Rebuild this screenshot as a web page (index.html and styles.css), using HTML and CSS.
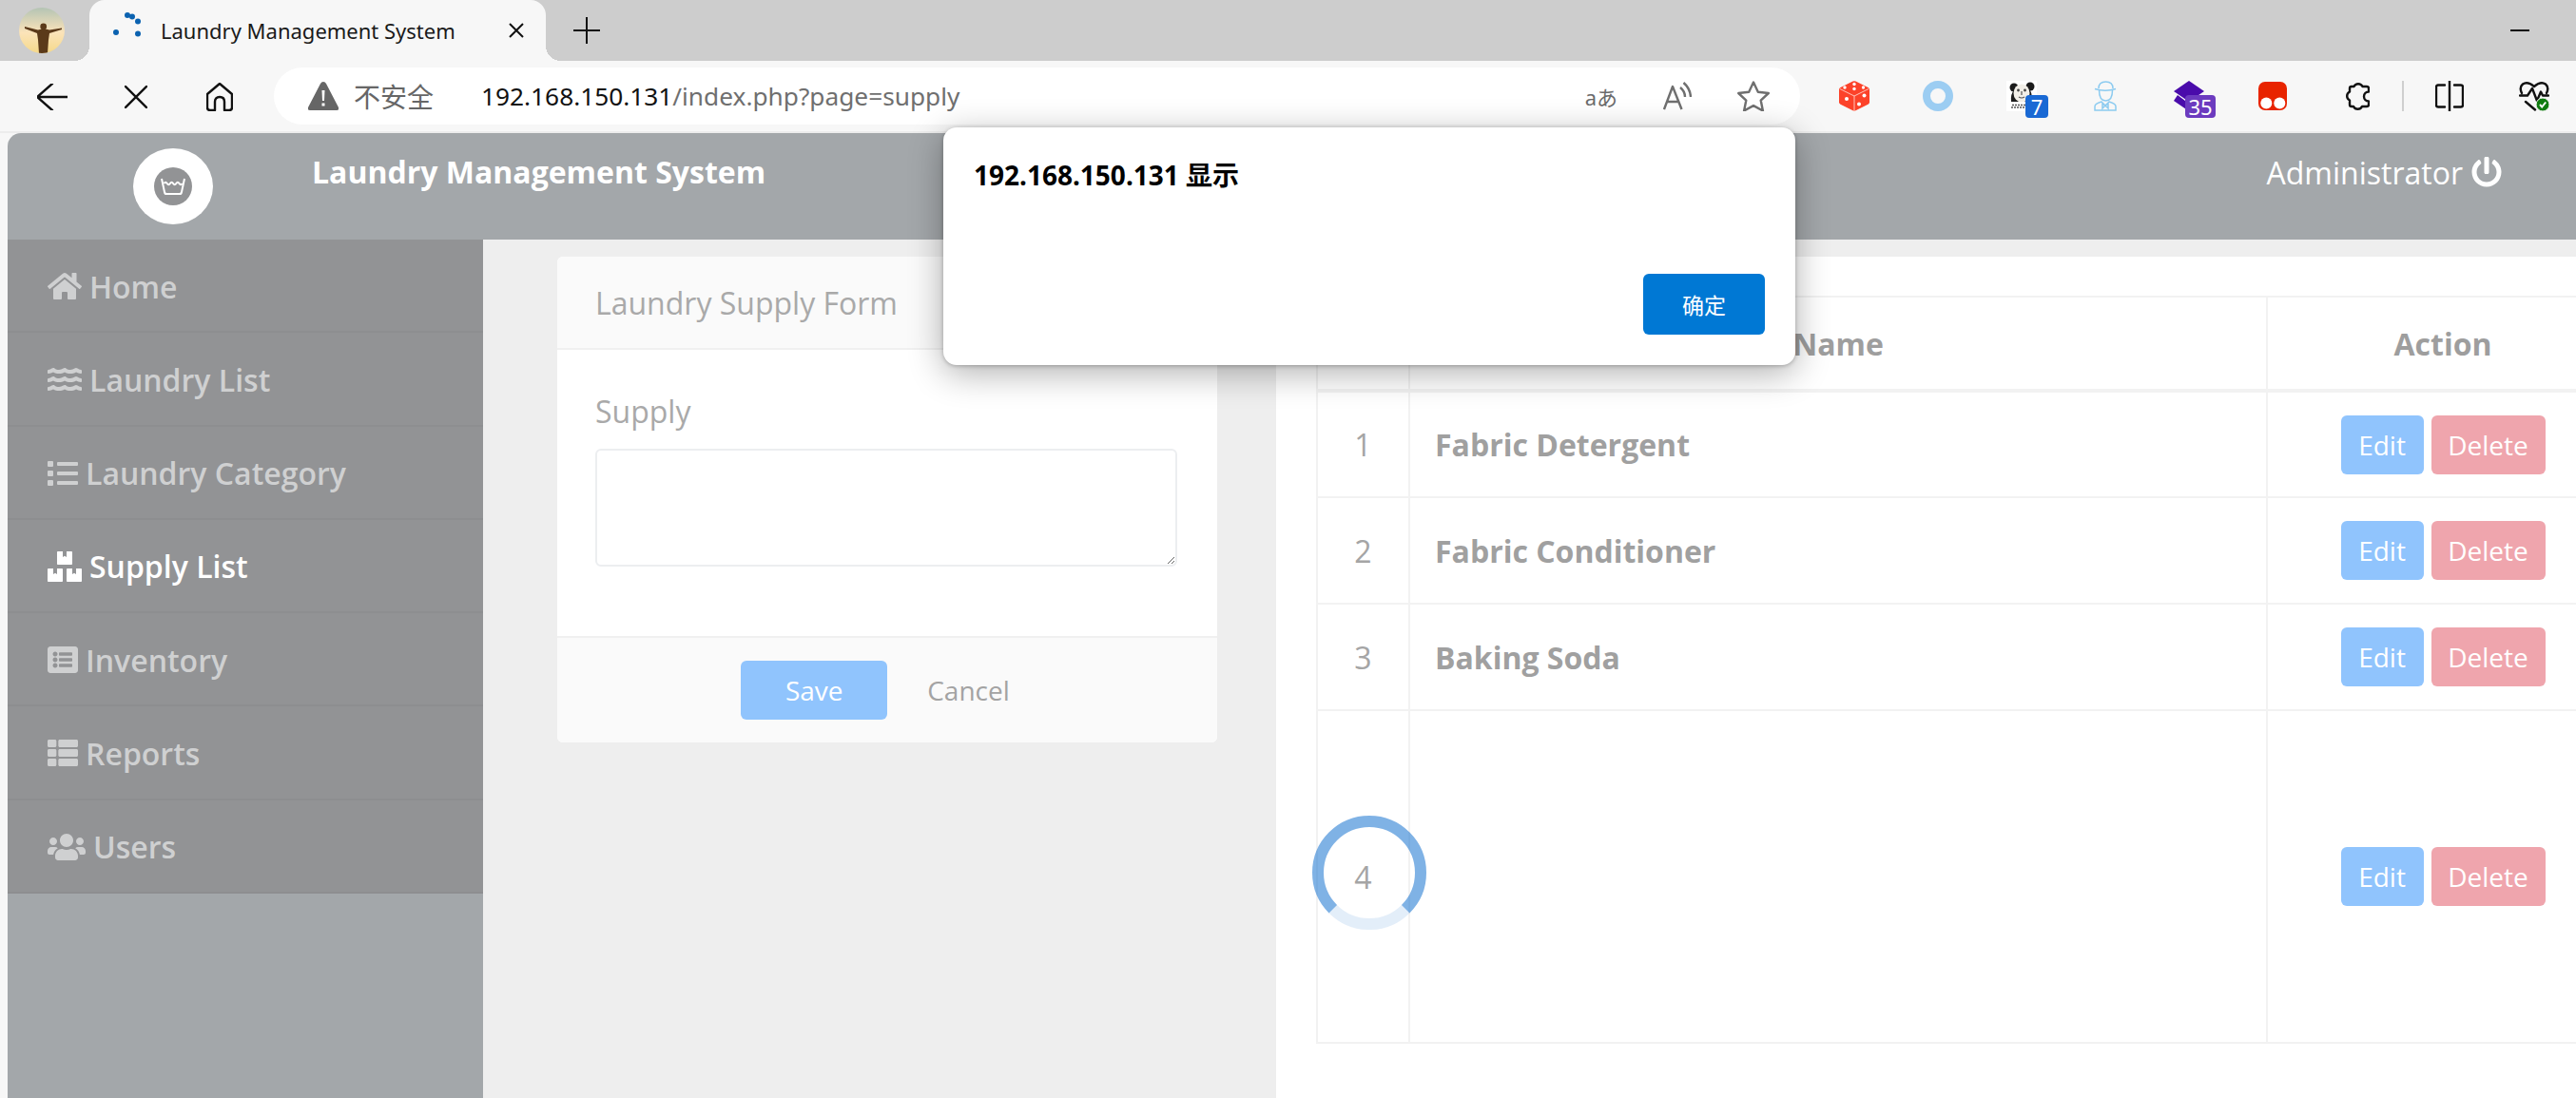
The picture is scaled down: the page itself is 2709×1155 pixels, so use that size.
FILE: index.html
```html
<!DOCTYPE html>
<html lang="en">
<head>
    <meta charset="UTF-8">
    <meta name="viewport" content="width=device-width, initial-scale=1.0">
    <title>Laundry Management System</title>
    <link rel="stylesheet" href="styles.css">
</head>
<body>
    <div class="tabstrip">
        <div class="avatar">
            <svg viewBox="0 0 48 48" width="48" height="48">
                <path class="avatar-man" d="M6 20l14 3.500q6-2 12 0l13-2v1.500l-13 4-1 7-1 14h-9l-1-14-1-7-13-5z"/>
                <circle class="avatar-man" cx="25.700" cy="20" r="3.400"/>
            </svg>
        </div>
        <div class="tab">
            <svg class="tab-spinner" viewBox="0 0 32 32" width="32" height="32">
                <circle cx="15" cy="3" r="3"/>
                <circle cx="20" cy="4.500" r="3"/>
                <circle cx="26" cy="9.500" r="3"/>
                <circle cx="3" cy="21" r="3"/>
                <circle cx="26" cy="22.500" r="3"/>
            </svg>
            <span class="tab-title">Laundry Management System</span>
            <svg class="tab-close" viewBox="0 0 16 16" width="16" height="16">
                <path d="M1 1l14 14M15 1L1 15"/>
            </svg>
        </div>
        <svg class="tab-new" viewBox="0 0 28 28" width="28" height="28">
            <path d="M14 0v28M0 14h28"/>
        </svg>
        <div class="minimize"></div>
    </div>

    <div class="toolbar">
        <div class="nav-button">
            <svg viewBox="0 0 32 28" width="32" height="28"><path class="line-icon" d="M32 14H0M16 0L0 14l16 14"/></svg>
        </div>
        <div class="nav-button">
            <svg viewBox="0 0 24 24" width="24" height="24"><path class="line-icon" d="M0 0l24 24M24 0L0 24"/></svg>
        </div>
        <div class="nav-button">
            <svg viewBox="0 0 28 30" width="28" height="30"><path class="line-icon" d="M14 1L1 12v14q0 3 3 3h5V20q0-5 5-5t5 5v9h5q3 0 3-3V12z"/></svg>
        </div>
        <div class="address">
            <svg class="warning" viewBox="0 0 32 30" width="32" height="30">
                <path d="M16 0q2 0 3 2l13 25q1 3-2 3H2q-3 0-2-3L13 2q1-2 3-2z"/>
                <path class="warning-mark" d="M14.500 9h3l-.5 11h-2zM14.500 22.500h3v3h-3z"/>
            </svg>
            <span class="not-secure">不安全</span>
            <span class="url"><span class="url-host">192.168.150.131</span>/index.php?page=supply</span>
            <div class="address-actions">
                <span class="translate">aあ</span>
                <svg class="read-aloud" viewBox="0 0 30 32" width="30" height="32">
                    <path d="M1 30L10 6l9.500 24M4.500 22h11.500M18 7q5 4 5 10M21.500 2q7 6 7.500 15"/>
                </svg>
                <svg class="star" viewBox="0 0 34 32" width="34" height="32">
                    <path d="M17 1.500l4.800 10.200 11 1.300-8.100 7.600 2.200 10.900L17 26.100 7.100 31.500l2.200-10.900L1.200 13l11-1.300z"/>
                </svg>
            </div>
        </div>
        <div class="extensions">
            <div class="ext">
                <svg viewBox="0 0 32 32" width="32" height="32">
                    <path class="dice" d="M14.500.5q1.500-.7 3 0l13 6.500q1.500.8 1.500 2.500v13q0 1.500-1.500 2.300l-13 6.500q-1.500.7-3 0l-13-6.500Q0 24 0 22.500v-13Q0 7.800 1.500 7z"/>
                    <path class="dice-line" d="M1 8.500l15 7.500 15-7.500M16 16v16"/>
                    <circle class="dice-dot" cx="6" cy="7" r="1.700"/>
                    <circle class="dice-dot" cx="16" cy="3.500" r="1.700"/>
                    <circle class="dice-dot" cx="16" cy="8.500" r="1.700"/>
                    <circle class="dice-dot" cx="25.500" cy="7" r="1.700"/>
                    <circle class="dice-dot" cx="8" cy="19" r="2"/>
                    <circle class="dice-dot" cx="26.500" cy="15.500" r="2"/>
                    <circle class="dice-dot" cx="21" cy="24.500" r="2"/>
                </svg>
            </div>
            <div class="ext">
                <svg viewBox="0 0 32 32" width="32" height="32"><circle class="ring" cx="16" cy="16" r="12"/></svg>
            </div>
            <div class="ext">
                <svg viewBox="0 0 32 32" width="32" height="32">
                    <rect class="panda-bg" width="32" height="32"/>
                    <circle class="panda-dark" cx="8" cy="7" r="4.500"/>
                    <circle class="panda-dark" cx="25" cy="6" r="4.500"/>
                    <path class="panda-dark" d="M5 22q-1-8 3-12h17q3 6 1 12z"/>
                    <ellipse class="panda-face" cx="16" cy="13" rx="8.500" ry="9.500"/>
                    <circle class="panda-eye" cx="12.500" cy="10" r="1.400"/>
                    <circle class="panda-eye" cx="19.500" cy="10" r="1.400"/>
                    <path class="panda-mouth" d="M13 17q3 2 6 0M16 11v4"/>
                    <path class="panda-text" d="M6 25.500h20M5 28h21"/>
                </svg>
                <span class="badge badge-blue">7</span>
            </div>
            <div class="ext">
                <svg viewBox="0 0 24 32" width="24" height="32">
                    <path class="figure" d="M5 8q0-7 7.500-7T20 8M1 8.500q11 3.500 22 0M5.500 10q0 11 7 11t7-11M1 31v-4q0-3 7-5l4 4 4-4q7 2 7 5v4zM9 24l3 2 3-2v5l-3-3-3 3z"/>
                </svg>
            </div>
            <div class="ext">
                <svg viewBox="0 0 32 32" width="32" height="32">
                    <path class="diamond" d="M16 0l16 11-16 11L0 11z"/>
                    <path class="diamond" d="M4 15l12 9 12-9 1 2-13 15L0 21z"/>
                </svg>
                <span class="badge badge-purple">35</span>
            </div>
            <div class="ext">
                <svg viewBox="0 0 30 30" width="30" height="30">
                    <rect class="monkey" width="30" height="30" rx="7"/>
                    <circle class="monkey-eye" cx="8.300" cy="22.500" r="6"/>
                    <circle class="monkey-eye" cx="22.300" cy="22.500" r="6"/>
                </svg>
            </div>
            <div class="ext">
                <svg viewBox="0 0 28 32" width="28" height="32">
                    <path class="line-icon" d="M9 6h2.500a5 5 0 0 1 9 0H25q2 0 2 2v3.500a5 5 0 0 0 0 10V25q0 2-2 2h-5a5 5 0 0 1-9 0H9q-2 0-2-2v-4.500a5 5 0 0 1 0-9V8q0-2 2-2z"/>
                </svg>
            </div>
            <div class="ext-sep"></div>
            <div class="ext ext-split">
                <svg viewBox="0 0 30 32" width="30" height="32">
                    <path class="line-icon" d="M10 4.500H3q-2 0-2 2v19q0 2 2 2h7M20 4.500h7q2 0 2 2v19q0 2-2 2h-7M15 0v32"/>
                </svg>
            </div>
            <div class="ext">
                <svg viewBox="0 0 32 32" width="32" height="32">
                    <path class="line-icon" d="M3 13Q0 7 4 3.500 9 0 16 6q7-6 12-2.500 4 3.500 1 9.500M1 15.500h8L14 8l5 13 4-9.500 2 4h6M7 22l10 8.500"/>
                    <circle class="check-bg" cx="25" cy="25" r="7"/>
                    <path class="check-mark" d="M22 25l2.200 2.500 4-5"/>
                </svg>
            </div>
        </div>
    </div>

    <div class="page">
        <div class="app">
            <div class="navbar">
                <div class="logo">
                    <div class="logo-inner">
                        <svg viewBox="0 0 26 26" width="26" height="26">
                            <path class="basin" d="M1 5l3 14q.3 2 2 2h14q1.700 0 2-2l3-14"/>
                            <path class="basin-wave" d="M3.500 10q1.600-2.500 3.200 0t3.200 0 3.200 0 3.200 0 3.200 0 3.200 0"/>
                        </svg>
                    </div>
                </div>
                <div class="brand">Laundry Management System</div>
                <div class="admin">
                    Administrator
                    <svg class="power" viewBox="0 0 512 512" width="32" height="32">
                        <path d="M400 54.100c63 45 104 118.600 104 201.900 0 136.800-110.800 247.700-247.500 248C120 504.300 8.200 393 8 256.400 7.900 173.100 48.900 99.300 111.800 54.200c11.700-8.300 28-4.800 35 7.700L162.600 90c5.900 10.500 3.100 23.800-6.600 31-41.500 30.800-68 79.600-68 134.900-.1 92.300 74.500 168.100 168 168.100 91.600 0 168.600-74.200 168-169.100-.3-51.800-24.700-101.800-68.100-134-9.700-7.200-12.400-20.500-6.400-30.900l15.800-28.100c7-12.400 23.200-16.100 34.800-7.800zM296 264V24c0-13.300-10.700-24-24-24h-32c-13.300 0-24 10.700-24 24v240c0 13.300 10.700 24 24 24h32c13.300 0 24-10.700 24-24z"/>
                    </svg>
                </div>
            </div>

            <div class="main">
                <div class="sidebar">
                    <a class="side-item">
                        <svg class="side-icon" viewBox="0 0 576 512" width="36" height="32"><path d="M280.370 148.260L96 300.110V464a16 16 0 0 0 16 16l112.060-.29a16 16 0 0 0 15.920-16V368a16 16 0 0 1 16-16h64a16 16 0 0 1 16 16v95.640a16 16 0 0 0 16 16.050L464 480a16 16 0 0 0 16-16V300L295.670 148.260a12.190 12.190 0 0 0-15.300 0zM571.600 251.470L488 182.560V44.050a12 12 0 0 0-12-12h-56a12 12 0 0 0-12 12v72.610L318.470 43a48 48 0 0 0-61 0L4.340 251.470a12 12 0 0 0-1.600 16.900l25.500 31A12 12 0 0 0 45.150 301l235.220-193.740a12.190 12.190 0 0 1 15.300 0L530.900 301a12 12 0 0 0 16.900-1.600l25.500-31a12 12 0 0 0-1.700-16.930z"/></svg>
                        Home
                    </a>
                    <a class="side-item">
                        <svg class="side-icon" viewBox="0 0 576 512" width="36" height="32"><path d="M562.100 383.900c-21.500-2.400-42.100-10.500-57.900-22.900-14.100-11.100-34.200-11.300-48.200 0-37.900 30.400-107.200 30.400-145.700-1.500-13.500-11.200-33-9.100-46.700 1.800-38 30.100-106.900 30-145.200-1.700-13.500-11.200-33.300-8.900-47.100 2-15.500 12.200-36 20.100-57.700 22.400-7.900.8-13.600 7.800-13.600 15.700v32.200c0 9.100 7.600 16.800 16.700 16 28.800-2.500 56.100-11.400 79.400-25.900 56.500 34.600 137 34.100 192 0 56.500 34.600 137 34.100 192 0 23.300 14.200 50.900 23.300 79.100 25.800 9.100.8 16.700-6.900 16.700-16v-31.600c.1-8-5.700-15.400-13.800-16.300zm0-144c-21.500-2.400-42.100-10.500-57.900-22.900-14.100-11.100-34.200-11.300-48.200 0-37.900 30.400-107.200 30.400-145.700-1.500-13.500-11.200-33-9.100-46.700 1.800-38 30.100-106.900 30-145.200-1.700-13.500-11.200-33.300-8.900-47.100 2-15.500 12.200-36 20.100-57.700 22.400-7.900.8-13.600 7.800-13.600 15.700v32.200c0 9.100 7.600 16.800 16.700 16 28.800-2.500 56.100-11.400 79.400-25.900 56.500 34.600 137 34.100 192 0 56.500 34.600 137 34.100 192 0 23.300 14.200 50.900 23.300 79.100 25.800 9.100.8 16.700-6.900 16.700-16v-31.600c.1-8-5.700-15.400-13.800-16.300zm0-144C540.600 93.400 520 85.400 504.200 73 490.100 61.900 470 61.700 456 73c-37.900 30.400-107.200 30.400-145.700-1.500-13.500-11.200-33-9.100-46.700 1.800-38 30.100-106.900 30-145.200-1.700-13.500-11.200-33.300-8.900-47.100 2-15.500 12.200-36 20.100-57.700 22.400-7.900.8-13.600 7.800-13.600 15.700v32.200c0 9.100 7.600 16.800 16.700 16 28.800-2.500 56.100-11.400 79.400-25.900 56.500 34.600 137 34.100 192 0 56.500 34.600 137 34.100 192 0 23.300 14.200 50.900 23.300 79.100 25.800 9.100.8 16.700-6.900 16.700-16v-31.600c.1-8-5.700-15.400-13.800-16.300z"/></svg>
                        Laundry List
                    </a>
                    <a class="side-item">
                        <svg class="side-icon" viewBox="0 0 512 512" width="32" height="32"><path d="M80 368H16a16 16 0 0 0-16 16v64a16 16 0 0 0 16 16h64a16 16 0 0 0 16-16v-64a16 16 0 0 0-16-16zm0-320H16A16 16 0 0 0 0 64v64a16 16 0 0 0 16 16h64a16 16 0 0 0 16-16V64a16 16 0 0 0-16-16zm0 160H16a16 16 0 0 0-16 16v64a16 16 0 0 0 16 16h64a16 16 0 0 0 16-16v-64a16 16 0 0 0-16-16zm416 176H176a16 16 0 0 0-16 16v32a16 16 0 0 0 16 16h320a16 16 0 0 0 16-16v-32a16 16 0 0 0-16-16zm0-320H176a16 16 0 0 0-16 16v32a16 16 0 0 0 16 16h320a16 16 0 0 0 16-16V80a16 16 0 0 0-16-16zm0 160H176a16 16 0 0 0-16 16v32a16 16 0 0 0 16 16h320a16 16 0 0 0 16-16v-32a16 16 0 0 0-16-16z"/></svg>
                        Laundry Category
                    </a>
                    <a class="side-item side-item-active">
                        <svg class="side-icon" viewBox="0 0 576 512" width="36" height="32"><path d="M560 288h-80v96l-32-21.300-32 21.300v-96h-80c-8.800 0-16 7.200-16 16v192c0 8.800 7.200 16 16 16h224c8.800 0 16-7.200 16-16V304c0-8.800-7.200-16-16-16zm-384-64h224c8.800 0 16-7.200 16-16V16c0-8.800-7.200-16-16-16h-80v96l-32-21.300L256 96V0h-80c-8.800 0-16 7.200-16 16v192c0 8.800 7.200 16 16 16zm64 64h-80v96l-32-21.300L96 384v-96H16c-8.800 0-16 7.200-16 16v192c0 8.800 7.200 16 16 16h224c8.800 0 16-7.200 16-16V304c0-8.800-7.200-16-16-16z"/></svg>
                        Supply List
                    </a>
                    <a class="side-item">
                        <svg class="side-icon" viewBox="0 0 512 512" width="32" height="32"><path d="M464 480H48c-26.510 0-48-21.490-48-48V80c0-26.510 21.490-48 48-48h416c26.510 0 48 21.490 48 48v352c0 26.510-21.490 48-48 48zM128 120c-22.091 0-40 17.909-40 40s17.909 40 40 40 40-17.909 40-40-17.909-40-40-40zm0 96c-22.091 0-40 17.909-40 40s17.909 40 40 40 40-17.909 40-40-17.909-40-40-40zm0 96c-22.091 0-40 17.909-40 40s17.909 40 40 40 40-17.909 40-40-17.909-40-40-40zm288-136v-32c0-6.627-5.373-12-12-12H204c-6.627 0-12 5.373-12 12v32c0 6.627 5.373 12 12 12h200c6.627 0 12-5.373 12-12zm0 96v-32c0-6.627-5.373-12-12-12H204c-6.627 0-12 5.373-12 12v32c0 6.627 5.373 12 12 12h200c6.627 0 12-5.373 12-12zm0 96v-32c0-6.627-5.373-12-12-12H204c-6.627 0-12 5.373-12 12v32c0 6.627 5.373 12 12 12h200c6.627 0 12-5.373 12-12z"/></svg>
                        Inventory
                    </a>
                    <a class="side-item">
                        <svg class="side-icon" viewBox="0 0 512 512" width="32" height="32"><path d="M149.333 216v80c0 13.255-10.745 24-24 24H24c-13.255 0-24-10.745-24-24v-80c0-13.255 10.745-24 24-24h101.333c13.255 0 24 10.745 24 24zM0 376v80c0 13.255 10.745 24 24 24h101.333c13.255 0 24-10.745 24-24v-80c0-13.255-10.745-24-24-24H24c-13.255 0-24 10.745-24 24zM125.333 32H24C10.745 32 0 42.745 0 56v80c0 13.255 10.745 24 24 24h101.333c13.255 0 24-10.745 24-24V56c0-13.255-10.745-24-24-24zm80 448H488c13.255 0 24-10.745 24-24v-80c0-13.255-10.745-24-24-24H205.333c-13.255 0-24 10.745-24 24v80c0 13.255 10.745 24 24 24zm-24-424v80c0 13.255 10.745 24 24 24H488c13.255 0 24-10.745 24-24V56c0-13.255-10.745-24-24-24H205.333c-13.255 0-24 10.745-24 24zm24 264H488c13.255 0 24-10.745 24-24v-80c0-13.255-10.745-24-24-24H205.333c-13.255 0-24 10.745-24 24v80c0 13.255 10.745 24 24 24z"/></svg>
                        Reports
                    </a>
                    <a class="side-item">
                        <svg class="side-icon" viewBox="0 0 640 512" width="40" height="32"><path d="M96 224c35.300 0 64-28.700 64-64s-28.700-64-64-64-64 28.700-64 64 28.700 64 64 64zm448 0c35.300 0 64-28.700 64-64s-28.700-64-64-64-64 28.700-64 64 28.700 64 64 64zm32 32h-64c-17.600 0-33.500 7.100-45.100 18.600 40.300 22.100 68.900 62 75.100 109.400h66c17.700 0 32-14.300 32-32v-32c0-35.300-28.700-64-64-64zm-256 0c61.900 0 112-50.100 112-112S381.900 32 320 32 208 82.100 208 144s50.100 112 112 112zm76.800 32h-8.300c-20.800 10-43.900 16-68.500 16s-47.600-6-68.500-16h-8.300C179.600 288 128 339.600 128 403.200V432c0 26.500 21.500 48 48 48h288c26.500 0 48-21.500 48-48v-28.800c0-63.600-51.600-115.200-115.200-115.200zm-223.700-13.400C161.500 263.100 145.600 256 128 256H64c-35.300 0-64 28.700-64 64v32c0 17.700 14.300 32 32 32h65.900c6.300-47.400 34.900-87.300 75.200-109.400z"/></svg>
                        Users
                    </a>
                </div>

                <div class="content">
                    <div class="form-card">
                        <div class="form-head">Laundry Supply Form</div>
                        <div class="form-body">
                            <label class="form-label">Supply</label>
                            <textarea class="form-input"></textarea>
                        </div>
                        <div class="form-foot">
                            <button class="btn btn-save">Save</button>
                            <button class="btn btn-cancel">Cancel</button>
                        </div>
                    </div>

                    <div class="list-card">
                        <table class="list-table">
                            <colgroup>
                                <col class="col-num">
                                <col class="col-name">
                                <col class="col-action">
                            </colgroup>
                            <thead>
                                <tr class="row-head">
                                    <th>#</th>
                                    <th>Name</th>
                                    <th>Action</th>
                                </tr>
                            </thead>
                            <tbody>
                                <tr class="row">
                                    <td class="cell-num">1</td>
                                    <td class="cell-name">Fabric Detergent</td>
                                    <td class="cell-action"><button class="btn btn-edit">Edit</button><button class="btn btn-delete">Delete</button></td>
                                </tr>
                                <tr class="row">
                                    <td class="cell-num">2</td>
                                    <td class="cell-name">Fabric Conditioner</td>
                                    <td class="cell-action"><button class="btn btn-edit">Edit</button><button class="btn btn-delete">Delete</button></td>
                                </tr>
                                <tr class="row">
                                    <td class="cell-num">3</td>
                                    <td class="cell-name">Baking Soda</td>
                                    <td class="cell-action"><button class="btn btn-edit">Edit</button><button class="btn btn-delete">Delete</button></td>
                                </tr>
                                <tr class="row row-tall">
                                    <td class="cell-num">
                                        4
                                        <svg class="spinner" viewBox="0 0 120 120" width="120" height="120">
                                            <path class="spinner-track" d="M21.800 98.200a54 54 0 0 0 76.400 0"/>
                                            <path class="spinner-arc" d="M21.800 98.200a54 54 0 1 1 76.400 0"/>
                                        </svg>
                                    </td>
                                    <td class="cell-name"></td>
                                    <td class="cell-action"><button class="btn btn-edit">Edit</button><button class="btn btn-delete">Delete</button></td>
                                </tr>
                            </tbody>
                        </table>
                    </div>
                </div>
            </div>
        </div>
    </div>

    <div class="dialog">
        <div class="dialog-title">192.168.150.131 显示</div>
        <div class="dialog-foot">
            <button class="dialog-ok">确定</button>
        </div>
    </div>
</body>
</html>
```

FILE: styles.css
```css
* {
    box-sizing: border-box;
}
body {
    margin: 0;
    width: 2709px;
    height: 1155px;
    overflow: hidden;
    display: flex;
    flex-direction: column;
    font-family: "Open Sans", "Noto Sans CJK SC", sans-serif;
    background-color: #f7f7f7;
}
svg {
    display: block;
    flex-shrink: 0;
}

/* browser chrome */
.tabstrip {
    height: 64px;
    flex-shrink: 0;
    display: flex;
    align-items: center;
    background-color: #cdcdcd;
    font-family: "Noto Sans", "Noto Sans CJK SC", sans-serif;
}
.avatar {
    width: 48px;
    height: 48px;
    margin-left: 20px;
    border-radius: 50%;
    overflow: hidden;
    background: linear-gradient(#b4c4b4, #fbe3b9 55%, #f5d98a);
}
.avatar-man {
    fill: #5b3a1a;
}
.tab {
    position: relative;
    width: 480px;
    height: 64px;
    margin-left: 26px;
    padding-left: 25px;
    display: flex;
    align-items: center;
    background-color: #f7f7f7;
    border-radius: 16px 16px 0 0;
}
.tab::before,
.tab::after {
    content: "";
    position: absolute;
    bottom: 0;
    width: 16px;
    height: 16px;
}
.tab::before {
    left: -16px;
    background: radial-gradient(circle at 0 0, transparent 16px, #f7f7f7 16px);
}
.tab::after {
    right: -16px;
    background: radial-gradient(circle at 100% 0, transparent 16px, #f7f7f7 16px);
}
.tab-spinner {
    fill: #0b62b0;
    margin-top: -6px;
}
.tab-title {
    margin-left: 18px;
    font-size: 22px;
    color: #1a1a1a;
    white-space: nowrap;
    width: 366px;
}
.tab-close path,
.tab-new path {
    fill: none;
    stroke: #111;
    stroke-width: 2;
}
.tab-new {
    margin-left: 29px;
}
.minimize {
    width: 20px;
    height: 2px;
    margin-left: auto;
    margin-right: 49px;
    background-color: #111;
}
.toolbar {
    height: 76px;
    flex-shrink: 0;
    display: flex;
    align-items: center;
    padding-left: 11px;
    background-color: #f7f7f7;
    border-bottom: 2px solid #ececec;
    font-family: "Noto Sans", "Noto Sans CJK SC", sans-serif;
}
.nav-button {
    width: 88px;
    height: 60px;
    margin-top: 1px;
    display: flex;
    align-items: center;
    justify-content: center;
}
.line-icon {
    fill: none;
    stroke: #111;
    stroke-width: 2.400;
    stroke-linejoin: round;
    stroke-linecap: round;
}
.address {
    width: 1605px;
    height: 60px;
    margin-left: 13px;
    padding-left: 36px;
    display: flex;
    align-items: center;
    background-color: #fff;
    border-radius: 30px;
}
.warning {
    fill: #666;
}
.warning-mark {
    fill: #fff;
}
.not-secure {
    margin-left: 16px;
    font-size: 28px;
    color: #666;
}
.url {
    margin-left: 50px;
    font-size: 26.250px;
    color: #6f6f6f;
    white-space: nowrap;
}
.url-host {
    color: #111;
}
.address-actions {
    margin-left: auto;
    margin-right: 32px;
    display: flex;
    align-items: center;
    gap: 48px;
}
.translate {
    font-size: 22px;
    color: #6b6b6b;
}
.read-aloud,
.star {
    fill: none;
    stroke: #6f6f6f;
    stroke-width: 2.400;
    stroke-linejoin: round;
}
.extensions {
    display: flex;
    align-items: center;
    margin-left: 13px;
}
.ext {
    position: relative;
    width: 88px;
    height: 60px;
    display: flex;
    align-items: center;
    justify-content: center;
}
.ext-sep {
    width: 2px;
    height: 32px;
    margin: 0 4px;
    background-color: #cfcfcf;
}
.ext-split {
    margin-right: 1px;
}
.badge {
    position: absolute;
    top: 29px;
    height: 24px;
    min-width: 24px;
    border-radius: 4px;
    color: #fff;
    font-size: 22px;
    line-height: 24px;
    text-align: center;
}
.badge-blue {
    left: 48px;
    background-color: #1a69d4;
}
.badge-purple {
    left: 40px;
    width: 32px;
    background-color: #6c3bbf;
}
.dice {
    fill: #fc4229;
}
.dice-line {
    fill: none;
    stroke: #ffc4ba;
    stroke-width: 1;
}
.dice-dot {
    fill: #fff;
}
.ring {
    fill: none;
    stroke: #9ccdf2;
    stroke-width: 8;
}
.panda-bg,
.panda-face {
    fill: #fff;
}
.panda-face {
    fill: #f2efe8;
}
.panda-dark {
    fill: #1c1c1c;
}
.panda-eye {
    fill: #444;
}
.panda-mouth {
    fill: none;
    stroke: #555;
    stroke-width: 1.200;
}
.panda-text {
    fill: none;
    stroke: #555;
    stroke-width: 1.500;
    stroke-dasharray: 2 1;
}
.figure {
    fill: none;
    stroke: #8ccbf0;
    stroke-width: 1.500;
}
.diamond {
    fill: #4a0cab;
}
.monkey {
    fill: #e82400;
}
.monkey-eye {
    fill: #fff;
}
.check-bg {
    fill: #107c10;
    stroke: #f7f7f7;
    stroke-width: 1;
}
.check-mark {
    fill: none;
    stroke: #fff;
    stroke-width: 2;
}

/* page */
.page {
    flex: 1;
    min-height: 0;
    padding-left: 8px;
    display: flex;
}
.app {
    flex: 1;
    display: flex;
    flex-direction: column;
    border-top-left-radius: 14px;
    overflow: hidden;
    background-color: #a3a7aa;
}
.navbar {
    height: 112px;
    flex-shrink: 0;
    display: flex;
    color: #fff;
}
.logo {
    width: 84px;
    height: 80px;
    margin: 16px 0 0 132px;
    display: flex;
    align-items: center;
    justify-content: center;
    background-color: #fff;
    border-radius: 50%;
}
.logo-inner {
    width: 40px;
    height: 40px;
    display: flex;
    align-items: center;
    justify-content: center;
    background-color: #929395;
    border-radius: 50%;
}
.basin,
.basin-wave {
    fill: none;
    stroke: #fff;
    stroke-width: 2;
}
.brand {
    margin: 20px 0 0 104px;
    font-size: 32px;
    font-weight: 700;
    line-height: 42px;
}
.admin {
    margin: 20px 78px 0 auto;
    display: flex;
    align-items: center;
    gap: 9px;
    height: 42px;
    font-size: 32px;
}
.power {
    fill: #fff;
}
.main {
    flex: 1;
    min-height: 0;
    display: flex;
}
.sidebar {
    width: 500px;
    flex-shrink: 0;
}
.side-item {
    height: 98.250px;
    padding: 2px 0 0 42px;
    display: flex;
    align-items: center;
    gap: 8px;
    background-color: #929395;
    border-bottom: 2px solid #8d8e90;
    color: #cfd0d1;
    font-size: 32px;
    font-weight: 600;
}
.side-item-active {
    color: #fff;
}
.side-icon {
    fill: currentColor;
}
.content {
    flex: 1;
    min-width: 0;
    padding: 18px 0 0 78px;
    display: flex;
    align-items: flex-start;
    gap: 62px;
    background-color: #eee;
}

/* form */
.form-card {
    width: 694px;
    height: 511px;
    flex-shrink: 0;
    display: flex;
    flex-direction: column;
    background-color: #fff;
    border-radius: 6px;
    overflow: hidden;
    color: #a9a9a9;
    font-size: 32px;
}
.form-head {
    height: 98px;
    padding-left: 40px;
    display: flex;
    align-items: center;
    background-color: #fafafa;
    border-bottom: 2px solid #f0f0f0;
}
.form-body {
    flex: 1;
    padding: 42px 40px 0;
}
.form-label {
    display: block;
    line-height: 46px;
    margin-bottom: 16px;
}
.form-input {
    display: block;
    width: 612px;
    height: 124px;
    border: 2px solid #eceef0;
    border-radius: 6px;
    outline: none;
}
.form-foot {
    height: 112px;
    padding-right: 4px;
    display: flex;
    align-items: center;
    justify-content: center;
    gap: 21px;
    background-color: #fafafa;
    border-top: 2px solid #f0f0f0;
}
.btn {
    height: 62px;
    padding: 0 21px;
    border: none;
    border-radius: 6px;
    font-family: inherit;
    font-size: 28px;
    color: #fff;
}
.btn-save {
    width: 154px;
    background-color: #90c4fd;
}
.btn-cancel {
    background-color: transparent;
    color: #a3a3a3;
}

/* table */
.list-card {
    width: 1500px;
    height: 900px;
    flex-shrink: 0;
    padding: 41px 0 0 42px;
    background-color: #fff;
}
.list-table {
    width: 1371px;
    table-layout: fixed;
    border-collapse: collapse;
    color: #a5a5a5;
    font-size: 32px;
}
.col-num {
    width: 97px;
}
.col-action {
    width: 370px;
}
.list-table th,
.list-table td {
    border: 2px solid #f2f2f2;
    padding: 0;
}
.row-head {
    height: 99px;
}
.list-table th {
    border-bottom-width: 4px;
    font-weight: 700;
    color: #9e9e9e;
}
.row {
    height: 112px;
}
.row-tall {
    height: 350px;
}
.cell-num {
    position: relative;
    text-align: center;
}
.cell-name {
    padding-left: 26px !important;
    font-weight: 700;
    color: #a0a0a0;
}
.cell-action {
    text-align: center;
    white-space: nowrap;
}
.btn-edit {
    width: 87px;
    padding: 0;
    margin-right: 8px;
    background-color: #90c4fd;
}
.btn-delete {
    width: 120px;
    padding: 0;
    background-color: #efa5ad;
}
.spinner {
    position: absolute;
    left: -6px;
    top: 50%;
    margin-top: -64px;
    fill: none;
    stroke-width: 12;
}
.spinner-arc {
    stroke: rgba(0, 101, 203, 0.5);
}
.spinner-track {
    stroke: rgba(0, 101, 203, 0.11);
}

/* alert on top of the page */
.dialog {
    position: absolute;
    left: 992px;
    top: 134px;
    width: 896px;
    height: 250px;
    padding: 32px 32px;
    background-color: #fff;
    border-radius: 14px;
    box-shadow: 0 8px 36px rgba(0, 0, 0, 0.32), 0 1px 4px rgba(0, 0, 0, 0.25);
    font-family: "Noto Sans", "Noto Sans CJK SC", sans-serif;
}
.dialog-title {
    font-size: 28px;
    font-weight: 700;
    line-height: 36px;
    color: #000;
}
.dialog-foot {
    margin-top: 86px;
    display: flex;
    justify-content: flex-end;
}
.dialog-ok {
    width: 128px;
    height: 64px;
    border: none;
    border-radius: 6px;
    background-color: #0078d4;
    color: #fff;
    font-family: inherit;
    font-size: 23px;
}
```
